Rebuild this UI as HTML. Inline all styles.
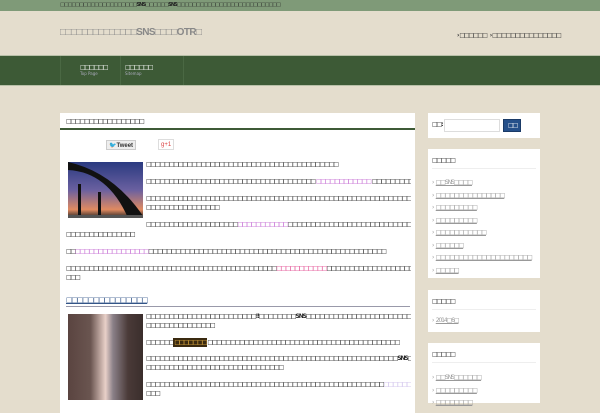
<!DOCTYPE html>
<html><head><meta charset="utf-8"><style>
*{margin:0;padding:0;box-sizing:border-box}
body{width:600px;height:400px;overflow:hidden;background:#e4ddcd;font-family:"DejaVu Sans",sans-serif;position:relative}
.a{position:absolute;white-space:nowrap;line-height:1}
.t{font-size:6px;color:#222;letter-spacing:-1.1px;font-weight:bold}
.g{color:#999;font-weight:normal}
.p{color:#c060d0}
.pk{color:#e0408a}
.bl{color:#335588}
.clipm{position:absolute;left:0;top:0;width:411px;height:400px;overflow:hidden}
.clips{position:absolute;left:0;top:0;width:537px;height:400px;overflow:hidden}
</style></head><body>
<div class="a" style="left:0;top:0;width:600px;height:11px;background:#7f9a78"></div>
<div class="a t" style="left:60px;top:3px;font-size:5px;letter-spacing:-0.9px;color:#222">□□□□□□□□□□□□□□□□□□□□SNS□□□□□□SNS□□□□□□□□□□□□□□□□□□□□□□□□□□□</div>
<div class="a" style="left:60px;top:28px;font-size:10px;color:#888;font-weight:bold;font-family:'Liberation Sans',sans-serif;letter-spacing:-0.6px">□□□□□□□□□□□□□□SNS□□□□OTR□</div>
<div class="a t" style="left:457px;top:33px;color:#333">› □□□□□□ &nbsp; › □□□□□□□□□□□□□□□</div>
<div class="a" style="left:0;top:55px;width:600px;height:31px;background:#3d5a36;border-top:1px solid #b8c0a8;border-bottom:1px solid #b8c0a8"></div>
<div class="a" style="left:60px;top:56px;width:124px;height:29px;border-left:1px solid #4a6843"></div>
<div class="a" style="left:120px;top:56px;width:64px;height:29px;border-left:1px solid #4a6843;border-right:1px solid #4a6843"></div>
<div class="a t" style="left:80px;top:65px;color:#fff">□□□□□□</div>
<div class="a" style="left:80px;top:72px;font-size:4px;color:#aab">Top Page</div>
<div class="a t" style="left:125px;top:65px;color:#fff">□□□□□□</div>
<div class="a" style="left:125px;top:72px;font-size:4px;color:#aab">Sitemap</div>

<div class="a" style="left:60px;top:113px;width:355px;height:300px;background:#fff"></div>
<div class="a" style="left:60px;top:128px;width:355px;height:2px;background:#3d5a36"></div>
<div class="clipm">
<div class="a t" style="left:66px;top:119px">□□□□□□□□□□□□□□□□□</div>
<div class="a" style="left:106px;top:140px;width:30px;height:10px;background:#eee;border:1px solid #ccc;font:bold 6px 'Liberation Sans';color:#333;padding:1px 2px"><span style="color:#3aa0e0">🐦</span>Tweet</div>
<div class="a" style="left:158px;top:139px;width:16px;height:11px;border:1px solid #ddd;font:6px 'Liberation Sans';color:#d44;padding:2px">g+1</div>
<div class="a" style="left:68px;top:162px;width:75px;height:56px;background:linear-gradient(180deg,#2a3a80 0%,#6a60a0 50%,#e08a60 85%,#222 100%)"></div>
<svg class="a" style="left:68px;top:162px" width="75" height="56"><path d="M0 8 Q40 10 60 56 L75 56 L75 54 Q45 10 0 0Z" fill="#111"/><rect x="10" y="22" width="3" height="34" fill="#111"/><rect x="30" y="30" width="3" height="26" fill="#111"/><rect x="0" y="53" width="75" height="3" fill="#555"/></svg>
<div class="a t" style="left:146px;top:162px">□□□□□□□□□□□□□□□□□□□□□□□□□□□□□□□□□□□□□□□□□□</div>
<div class="a t" style="left:146px;top:179px">□□□□□□□□□□□□□□□□□□□□□□□□□□□□□□□□□□□□□ <span class="p">□□□□□□□□□□□□</span> □□□□□□□□□□</div>
<div class="a t" style="left:146px;top:196px">□□□□□□□□□□□□□□□□□□□□□□□□□□□□□□□□□□□□□□□□□□□□□□□□□□□□□□□□□□□□□□□□□□□□</div>
<div class="a t" style="left:146px;top:205px">□□□□□□□□□□□□□□□□</div>
<div class="a t" style="left:146px;top:222px">□□□□□□□□□□□□□□□□□□□□<span class="p">□□□□□□□□□□□</span>□□□□□□□□□□□□□□□□□□□□□□□□□□□□□□□□□□□□□□□□□</div>
<div class="a t" style="left:66px;top:232px">□□□□□□□□□□□□□□□</div>
<div class="a t" style="left:66px;top:249px">□□<span class="p">□□□□□□□□□□□□□□□□</span>□□□□□□□□□□□□□□□□□□□□□□□□□□□□□□□□□□□□□□□□□□□□□□□□□□□□</div>
<div class="a t" style="left:66px;top:266px">□□□□□□□□□□□□□□□□□□□□□□□□□□□□□□□□□□□□□□□□□□□□□□<span class="pk">□□□□□□□□□□□</span>□□□□□□□□□□□□□□□□□□□□□□□□□□□□□□□□□□□□□□□□</div>
<div class="a t" style="left:66px;top:275px">□□□</div>
<div class="a t bl" style="left:66px;top:297px;font-size:7px;letter-spacing:-1.2px;text-decoration:underline">□□□□□□□□□□□□□□□</div>
<div class="a" style="left:66px;top:306px;width:344px;height:1px;background:#99a"></div>
<div class="a" style="left:68px;top:314px;width:75px;height:90px;background:linear-gradient(90deg,#5a4440 0%,#6a5550 30%,#e8d0c8 50%,#8a8088 60%,#4a3a38 80%,#3a2e2c 100%)"></div>
<div class="a t" style="left:146px;top:314px">□□□□□□□□□□□□□□□□□□□□□□□□!!□□□□□□□□SNS□□□□□□□□□□□□□□□□□□□□□□□SNS□□□□□□□</div>
<div class="a t" style="left:146px;top:323px">□□□□□□□□□□□□□□□</div>
<div class="a t" style="left:146px;top:340px">□□□□□□<span style="background:#3a2a10;color:#e8b040;padding:1px">□□□□□□□</span>□□□□□□□□□□□□□□□□□□□□□□□□□□□□□□□□□□□□□□□□□□</div>
<div class="a t" style="left:146px;top:356px">□□□□□□□□□□□□□□□□□□□□□□□□□□□□□□□□□□□□□□□□□□□□□□□□□□□□□□□SNS□□□□□□□</div>
<div class="a t" style="left:146px;top:365px">□□□□□□□□□□□□□□□□□□□□□□□□□□□□□□</div>
<div class="a t" style="left:146px;top:382px">□□□□□□□□□□□□□□□□□□□□□□□□□□□□□□□□□□□□□□□□□□□□□□□□□□□□<span style="color:#c8b8e8">□□□□□□</span>□□□□□□□□□□□□□□□□□□□□□□□□□□□□</div>
<div class="a t" style="left:146px;top:391px">□□□</div>
</div>

<div class="a" style="left:428px;top:113px;width:112px;height:25px;background:#fff"></div>
<div class="a t" style="left:432px;top:122px">□□:</div>
<div class="a" style="left:444px;top:119px;width:56px;height:13px;border:1px solid #ddd;background:#fff"></div>
<div class="a" style="left:503px;top:119px;width:18px;height:13px;background:#25508a;border:1px solid #1a3a66"></div>
<div class="a t" style="left:508px;top:123px;color:#fff">□□</div>

<div class="a" style="left:428px;top:149px;width:112px;height:129px;background:#fff"></div>
<div class="a t" style="left:432px;top:158px">□□□□□</div>
<div class="a" style="left:432px;top:168px;width:104px;height:1px;background:#eee"></div>
<div class="a t g" style="left:432px;top:177px;line-height:12.5px;white-space:pre;letter-spacing:-1.1px">›   <u>□□SNS□□□□</u>
›   <u>□□□□□□□□□□□□□□□</u>
›   <u>□□□□□□□□□</u>
›   <u>□□□□□□□□□</u>
›   <u>□□□□□□□□□□□</u>
›   <u>□□□□□□</u>
›   <u>□□□□□□□□□□□□□□□□□□□□□</u>
›   <u>□□□□□</u></div>

<div class="a" style="left:428px;top:290px;width:112px;height:42px;background:#fff"></div>
<div class="a t" style="left:432px;top:299px">□□□□□</div>
<div class="a" style="left:432px;top:309px;width:104px;height:1px;background:#eee"></div>
<div class="a t g" style="left:432px;top:318px;white-space:pre">›   <u>2014□6□</u></div>

<div class="a" style="left:428px;top:343px;width:112px;height:60px;background:#fff"></div>
<div class="a t" style="left:432px;top:352px">□□□□□</div>
<div class="a" style="left:432px;top:362px;width:104px;height:1px;background:#eee"></div>
<div class="a t g" style="left:432px;top:372px;line-height:12.5px;white-space:pre">›   <u>□□SNS□□□□□□</u>
›   <u>□□□□□□□□□</u>
›   <u>□□□□□□□□</u></div>
</body></html>
